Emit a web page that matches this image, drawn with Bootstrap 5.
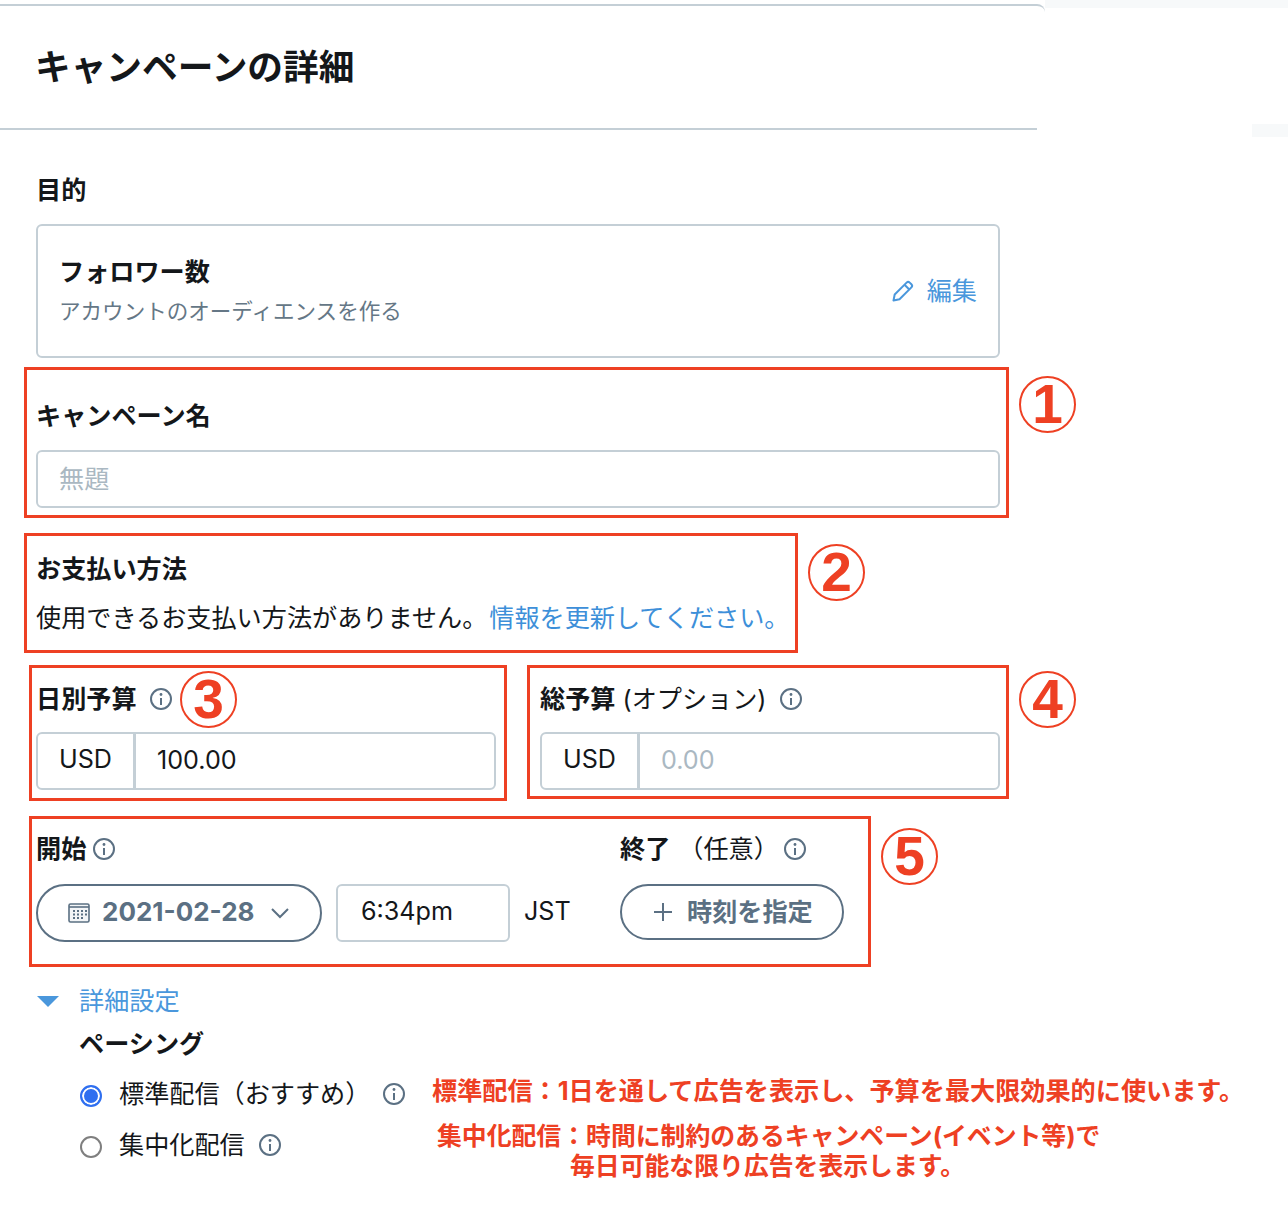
<!DOCTYPE html>
<html lang="ja">
<head>
    <meta charset="UTF-8">
    <meta name="viewport" content="width=device-width, initial-scale=1.0">
    <title>キャンペーンの詳細</title>
    <link href="https://cdn.jsdelivr.net/npm/bootstrap@5.3.0/dist/css/bootstrap.min.css" rel="stylesheet">
    <style>
        body {
            font-family: Inter, "Noto Sans CJK JP", sans-serif;
            font-size: 25.15px;
            line-height: 36px;
            color: #14171a;
            background: #fff;
            overflow-x: hidden;
        }
        .page-top { height: 4px; }
        .page-top-fill { flex: 1; height: 8px; background: #f7f9fa; margin-left: 1045px; }
        .page-fleck { position: absolute; left: 1252px; top: 124px; width: 36px; height: 13px; background: #f7f9fa; }
        .head-shell { width: 1045px; border-top: 2px solid #c4cfd6; border-top-right-radius: 8px; }
        .head-inner { width: 1037px; height: 124px; border-bottom: 2px solid #c4cfd6; padding: 42px 0 0 35px; }
        .head-title { font-size: 35.7px; line-height: 38px; font-weight: 700; margin: 0; }
        .form-area { padding-left: 24px; }
        .goal-label { margin: 42px 0 16px 12px; font-weight: 700; }
        .field-label { font-weight: 700; margin: 0; }
        .goal-card { width: 964px; height: 134px; margin-left: 12px; border: 2px solid #c4cfd6; border-radius: 6px; padding: 0 21px; }
        .goal-title { font-weight: 700; }
        .goal-sub { font-size: 21.55px; color: #657786; margin-top: 3px; }
        .edit-link { color: #4a97dc; text-decoration: none; }
        .red-box { position: relative; border: 3px solid #ee4023; }
        .box-name { width: 985px; margin-top: 9px; padding: 28px 6px 7px 9px; }
        .box-pay { width: 774px; margin-top: 15px; padding: 15px 9px 14px 9px; }
        .box-daily { width: 478px; margin-left: 5px; padding: 13px 8px 8px 4px; }
        .box-total { width: 482px; padding: 13px 6px 6px 10px; }
        .box-dates { width: 842px; margin: 15px 0 0 5px; padding: 12px 4px 22px 4px; }
        .budget-row { margin-top: 12px; gap: 20px; }
        .budget-label { margin-bottom: 15px; }
        .date-label { margin-bottom: 17px; }
        .pay-line { margin: 13px 0 0; }
        .pay-line a { color: #3d8fd9; text-decoration: none; margin-left: 2px; }
        .num-badge {
            position: absolute;
            width: 57px;
            height: 57px;
            border: 2px solid #ee4023;
            border-radius: 50%;
            color: #ee4023;
            font-family: "Liberation Sans", sans-serif;
            font-size: 55px;
            line-height: 53px;
            font-weight: 700;
            text-align: center;
        }
        .badge-one { left: 992px; top: 6px; }
        .badge-two { left: 781px; top: 8px; }
        .badge-three { left: 148px; top: 3px; }
        .badge-four { left: 489px; top: 3px; }
        .badge-five { left: 849px; top: 9px; }
        .plain-input.form-control {
            height: 58px;
            font-size: 25.15px;
            color: #14171a;
            border: 2px solid #c4cfd6;
            border-radius: 6px;
            padding: 0 21px;
            box-shadow: none;
        }
        .plain-input.form-control::placeholder { color: #aab8c2; }
        .money-group { height: 58px; }
        .money-group .input-group-text {
            width: 99px;
            justify-content: center;
            font-size: 25.15px;
            color: #14171a;
            background: #fff;
            border: 2px solid #c4cfd6;
            border-radius: 6px 0 0 6px;
            padding: 0 0 2px;
        }
        .money-group .plain-input.form-control { margin-left: -2px; border-radius: 0 6px 6px 0; padding-bottom: 2px; }
        .info-icon { width: 24px; height: 24px; flex: none; }
        .date-col { width: 584px; }
        .date-gap { gap: 6px; }
        .date-btn.btn, .add-btn.btn {
            display: flex;
            align-items: center;
            border: 2px solid #5b7083;
            color: #5b7083;
            font-size: 25.15px;
            font-weight: 700;
            background: #fff;
            padding: 0;
        }
        .date-btn.btn { width: 286px; height: 58px; padding-left: 30px; }
        .date-text { font-size: 26px; padding-bottom: 4px; }
        .add-btn.btn { width: 224px; height: 56px; padding-left: 32px; }
        .add-text { margin-left: -1px; padding-top: 2px; }
        .time-input.form-control { width: 174px; margin-left: 14px; padding: 0 0 4px 23px; }
        .zone-text { margin-left: 14px; padding-bottom: 4px; }
        .more-row { margin: 16px 0 0 13px; color: #4a97dc; }
        .more-row .more-text { margin-left: 20px; }
        .pace-area { padding-left: 55px; }
        .pace-title { margin: 7px 0 0; font-weight: 700; }
        .pace-opts { width: 353px; }
        .pace-row { margin-top: 14px; height: 36px; }
        .pace-row + .pace-row { margin-top: 15px; }
        .pace-row .form-check-input {
            width: 22px;
            height: 22px;
            margin: 3px 17px 0 1px;
            flex: none;
            border: 2px solid #7f7f7f;
            box-shadow: none;
        }
        .pace-row .form-check-input:checked {
            background-color: #2f6ff0;
            background-image: none;
            border-color: #2f6ff0;
            box-shadow: inset 0 0 0 2px #fff;
        }
        .pace-info-one { margin-left: 12px; }
        .pace-info-two { margin-left: 13px; }
        .note-text { color: #ee4023; font-weight: 700; white-space: nowrap; }
        .note-one { margin-top: 11px; }
        .note-two { width: 661px; margin: 12px 0 0 5px; font-size: 24.85px; line-height: 30px; text-align: center; }
    </style>
</head>
<body>
    <div class="page-top d-flex">
        <div class="page-top-fill"></div>
    </div>
    <div class="page-fleck"></div>

    <!-- Cabecera -->
    <div class="head-shell">
        <div class="head-inner">
            <h1 class="head-title">キャンペーンの詳細</h1>
        </div>
    </div>

    <div class="form-area">
        <div class="goal-label">目的</div>
        <div class="goal-card d-flex align-items-center justify-content-between">
            <div>
                <div class="goal-title">フォロワー数</div>
                <div class="goal-sub">アカウントのオーディエンスを作る</div>
            </div>
            <a href="#" class="edit-link d-flex align-items-center">
                <svg width="24" height="24" viewBox="0 0 24 24" fill="none" stroke="#4a97dc" stroke-width="2" stroke-linejoin="round" class="me-2"><path d="M2.5 21.5l1.2-6L15.6 3.6a2.2 2.2 0 0 1 3.1 0l1.7 1.7a2.2 2.2 0 0 1 0 3.1L8.5 20.3z"/><path d="M13.5 5.7l4.8 4.8"/></svg>
                <span class="ms-1">編集</span>
            </a>
        </div>

        <!-- 1: nombre -->
        <div class="red-box box-name">
            <div class="field-label mb-3">キャンペーン名</div>
            <input type="text" class="form-control plain-input" placeholder="無題">
            <span class="num-badge badge-one">1</span>
        </div>

        <!-- 2: pago -->
        <div class="red-box box-pay">
            <div class="field-label">お支払い方法</div>
            <p class="pay-line text-nowrap">使用できるお支払い方法がありません。<a href="#">情報を更新してください。</a></p>
            <span class="num-badge badge-two">2</span>
        </div>

        <!-- 3 y 4: presupuesto -->
        <div class="d-flex align-items-start budget-row">
            <div class="red-box box-daily">
                <div class="d-flex align-items-center gap-2 budget-label">
                    <span class="field-label">日別予算</span>
                    <svg class="info-icon ms-1" viewBox="0 0 24 24" fill="none" stroke="#5b7083" stroke-width="2"><circle cx="12" cy="12" r="10"/><circle cx="12" cy="7.5" r="1.4" fill="#5b7083" stroke="none"/><path d="M12 11v7"/></svg>
                </div>
                <div class="input-group money-group">
                    <span class="input-group-text">USD</span>
                    <input type="text" class="form-control plain-input" value="100.00">
                </div>
                <span class="num-badge badge-three">3</span>
            </div>
            <div class="red-box box-total">
                <div class="d-flex align-items-center gap-2 budget-label">
                    <span><span class="field-label">総予算</span> (オプション)</span>
                    <svg class="info-icon ms-1" viewBox="0 0 24 24" fill="none" stroke="#5b7083" stroke-width="2"><circle cx="12" cy="12" r="10"/><circle cx="12" cy="7.5" r="1.4" fill="#5b7083" stroke="none"/><path d="M12 11v7"/></svg>
                </div>
                <div class="input-group money-group">
                    <span class="input-group-text">USD</span>
                    <input type="text" class="form-control plain-input" placeholder="0.00">
                </div>
                <span class="num-badge badge-four">4</span>
            </div>
        </div>

        <!-- 5: fechas -->
        <div class="red-box box-dates d-flex">
            <div class="date-col">
                <div class="d-flex align-items-center date-gap date-label">
                    <span class="field-label">開始</span>
                    <svg class="info-icon" viewBox="0 0 24 24" fill="none" stroke="#5b7083" stroke-width="2"><circle cx="12" cy="12" r="10"/><circle cx="12" cy="7.5" r="1.4" fill="#5b7083" stroke="none"/><path d="M12 11v7"/></svg>
                </div>
                <div class="d-flex align-items-center">
                    <button type="button" class="btn date-btn rounded-pill">
                        <svg width="22" height="20" viewBox="0 0 22 20" fill="none" class="me-2"><rect x="1" y="1" width="20" height="18" rx="1.5" fill="#f3f5f7" stroke="#5b7083" stroke-width="1.6"/><path d="M1 4h20" stroke="#5b7083" stroke-width="1.6"/><g fill="#5b7083"><rect x="5" y="7" width="2" height="2"/><rect x="9" y="7" width="2" height="2"/><rect x="13" y="7" width="2" height="2"/><rect x="17" y="7" width="2" height="2"/><rect x="5" y="10.500" width="2" height="2"/><rect x="9" y="10.500" width="2" height="2"/><rect x="13" y="10.500" width="2" height="2"/><rect x="17" y="10.500" width="2" height="2"/><rect x="5" y="14" width="2" height="2"/><rect x="9" y="14" width="2" height="2"/><rect x="13" y="14" width="2" height="2"/></g></svg>
                        <span class="ms-1 date-text">2021-02-28</span>
                        <svg width="20" height="12" viewBox="0 0 20 12" fill="none" stroke="#5b7083" stroke-width="2" class="ms-3"><path d="M2 2l8 8 8-8"/></svg>
                    </button>
                    <input type="text" class="form-control plain-input time-input" value="6:34pm">
                    <span class="zone-text">JST</span>
                </div>
            </div>
            <div>
                <div class="d-flex align-items-center date-label">
                    <span class="field-label">終了</span><span class="ms-2">（任意）</span>
                    <svg class="info-icon ms-1" viewBox="0 0 24 24" fill="none" stroke="#5b7083" stroke-width="2"><circle cx="12" cy="12" r="10"/><circle cx="12" cy="7.5" r="1.4" fill="#5b7083" stroke="none"/><path d="M12 11v7"/></svg>
                </div>
                <button type="button" class="btn add-btn rounded-pill">
                    <svg width="18" height="18" viewBox="0 0 18 18" fill="none" stroke="#5b7083" stroke-width="2" class="me-3"><path d="M9 0v18M0 9h18"/></svg>
                    <span class="add-text">時刻を指定</span>
                </button>
            </div>
            <span class="num-badge badge-five">5</span>
        </div>

        <!-- Detalles -->
        <div class="more-row d-flex align-items-center">
            <svg width="22" height="11" viewBox="0 0 22 11" fill="#4a97dc"><path d="M0 0h22L11 11z"/></svg>
            <span class="more-text">詳細設定</span>
        </div>
        <div class="pace-area">
            <div class="pace-title">ペーシング</div>
            <div class="d-flex">
                <div class="pace-opts">
                    <div class="pace-row d-flex align-items-center">
                        <input class="form-check-input" type="radio" name="pacing" checked>
                        <span>標準配信（おすすめ）</span>
                        <svg class="info-icon pace-info-one" viewBox="0 0 24 24" fill="none" stroke="#5b7083" stroke-width="2"><circle cx="12" cy="12" r="10"/><circle cx="12" cy="7.5" r="1.4" fill="#5b7083" stroke="none"/><path d="M12 11v7"/></svg>
                    </div>
                    <div class="pace-row d-flex align-items-center">
                        <input class="form-check-input" type="radio" name="pacing">
                        <span>集中化配信</span>
                        <svg class="info-icon pace-info-two" viewBox="0 0 24 24" fill="none" stroke="#5b7083" stroke-width="2"><circle cx="12" cy="12" r="10"/><circle cx="12" cy="7.5" r="1.4" fill="#5b7083" stroke="none"/><path d="M12 11v7"/></svg>
                    </div>
                </div>
                <div class="note-text">
                    <div class="note-one">標準配信：1日を通して広告を表示し、予算を最大限効果的に使います。</div>
                    <div class="note-two">集中化配信：時間に制約のあるキャンペーン(イベント等)で<br>毎日可能な限り広告を表示します。</div>
                </div>
            </div>
        </div>
    </div>
    <script src="https://cdn.jsdelivr.net/npm/bootstrap@5.3.0/dist/js/bootstrap.bundle.min.js"></script>
</body>
</html>
